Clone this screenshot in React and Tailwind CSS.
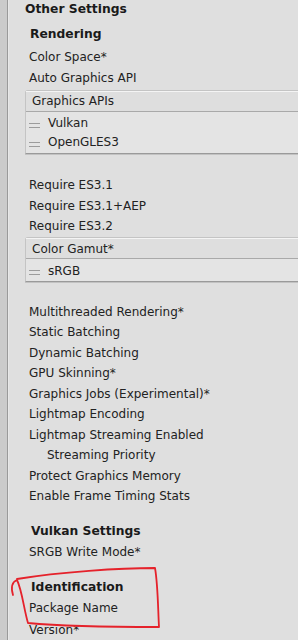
import React from "react";

const font = { fontFamily: '"DejaVu Sans", Verdana, sans-serif' };

function Row({ children, indent = false, h = "h-[20.5px]" }) {
  return (
    <div className={`${h} flex items-center ${indent ? "pl-[38px]" : "pl-[20px]"} text-[12px] text-[#222222] whitespace-nowrap`}>
      {children}
    </div>
  );
}

function Handle() {
  return (
    <span className="flex flex-col gap-[3px] w-[11px] mr-[8px] mt-[4px]">
      <span className="block h-[1px] bg-[#9c9c9c]" />
      <span className="block h-[1px] bg-[#9c9c9c]" />
    </span>
  );
}

function ListBox({ title, items, className = "" }) {
  return (
    <div className={`ml-[16px] mr-[-4px] rounded-tl-[3px] border border-[#c4c4c4] border-b-[#9a9a9a] shadow-[0_1px_0_#c2c2c2] ${className}`}>
      <div className="h-[21px] flex items-center pl-[6px] bg-[#dedede] border-t border-t-[#f4f4f4] border-b border-b-[#a9a9a9] text-[12px] text-[#222222] whitespace-nowrap">
        {title}
      </div>
      <div className="bg-[#e4e4e4] pt-[2px] pb-[1px]">
        {items.map((it) => (
          <div key={it} className="h-[19px] flex items-center pl-[3px] text-[12px] text-[#222222] whitespace-nowrap">
            <Handle />
            {it}
          </div>
        ))}
      </div>
    </div>
  );
}

function Bold({ children, className = "" }) {
  return (
    <div className={`flex items-center pl-[21px] text-[12.3px] font-bold text-[#1a1a1a] whitespace-nowrap ${className}`}>
      {children}
    </div>
  );
}

export default function App() {
  return (
    <div className="relative w-[298px] h-[640px] overflow-hidden bg-[#dfdfdf] flex" style={font}>
      <div className="w-[8px] shrink-0 bg-[#cbcbcb] border-r border-[#9a9a9a]" />
      <div className="w-[1px] shrink-0 bg-[#e8e8e8]" />
      <div className="flex-1 flex flex-col">
        <div className="h-[19px] flex items-center pl-[16px] text-[12.3px] font-bold text-[#1a1a1a] whitespace-nowrap">
          Other Settings
        </div>
        <Bold className="h-[20px] mt-[6px]">Rendering</Bold>
        <div className="mt-[3px]">
          <Row h="h-[21px]">Color Space*</Row>
          <Row h="h-[21px]">Auto Graphics API</Row>
        </div>
        <ListBox className="mt-[1px]" title="Graphics APIs" items={["Vulkan", "OpenGLES3"]} />
        <div className="mt-[21px]">
          <Row>Require ES3.1</Row>
          <Row>Require ES3.1+AEP</Row>
          <Row>Require ES3.2</Row>
        </div>
        <ListBox className="mt-[1px]" title="Color Gamut*" items={["sRGB"]} />
        <div className="mt-[19px]">
          <Row>Multithreaded Rendering*</Row>
          <Row>Static Batching</Row>
          <Row>Dynamic Batching</Row>
          <Row>GPU Skinning*</Row>
          <Row>Graphics Jobs (Experimental)*</Row>
          <Row>Lightmap Encoding</Row>
          <Row>Lightmap Streaming Enabled</Row>
          <Row indent>Streaming Priority</Row>
          <Row>Protect Graphics Memory</Row>
          <Row>Enable Frame Timing Stats</Row>
        </div>
        <Bold className="h-[22px] mt-[14px] pl-[22px]">Vulkan Settings</Bold>
        <Row h="h-[21px]">SRGB Write Mode*</Row>
        <Bold className="h-[22px] mt-[14px] pl-[22px]">Identification</Bold>
        <Row h="h-[22px]">Package Name</Row>
        <Row h="h-[21.5px]">Version*</Row>
      </div>
      <svg className="absolute left-0 top-[560px] pointer-events-none" width="170" height="75" viewBox="0 0 170 75">
        <path
          d="M 13 35 C 11 28, 12 22, 17 20 C 22 30, 24 50, 28 63 C 60 66, 120 67, 159 67 C 158 50, 158 25, 155 8 C 120 8, 60 12, 17 19"
          fill="none"
          stroke="#e5222b"
          strokeWidth="1.8"
          strokeLinecap="round"
          strokeLinejoin="round"
        />
      </svg>
    </div>
  );
}
